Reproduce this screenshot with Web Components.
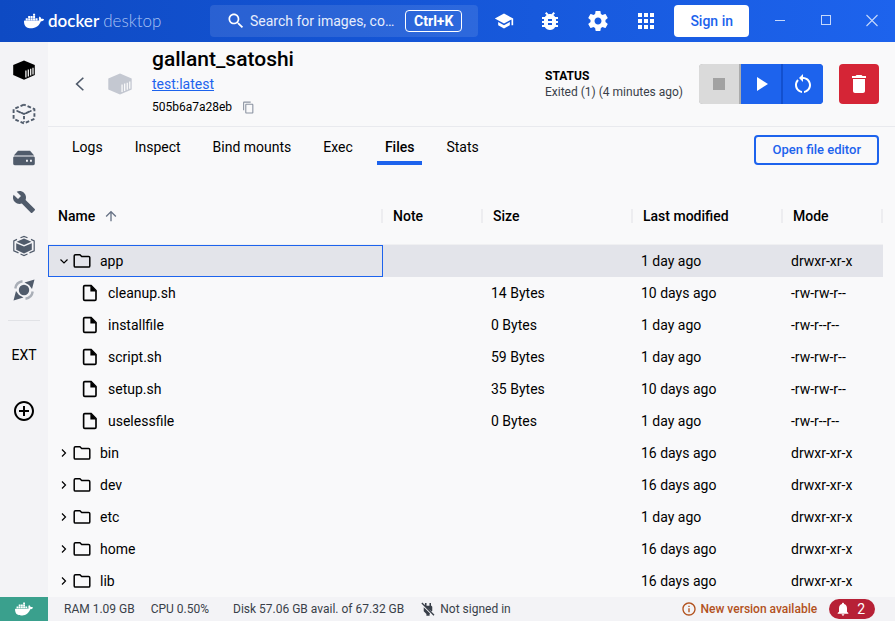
<!DOCTYPE html>
<html lang="en">
<head>
<meta charset="utf-8">
<title>Docker Desktop</title>
<style>
  html, body { height: 100%; margin: 0; }
  body {
    display: flex;
    font: 14px/20px Roboto, "Liberation Sans", sans-serif;
    color: #000;
    background: #f9f9fa;
    --blue: #1d63ed;
    --slate: #505b6b;
    --panel: #f3f3f6;
    --line: #e9eaee;
  }
</style>
</head>
<body>
<desktop-app></desktop-app>
<script>
const WHALE = '<path d="M13.983 11.078h2.119a.186.186 0 00.186-.185V9.006a.186.186 0 00-.186-.186h-2.119a.185.185 0 00-.185.185v1.888c0 .102.083.185.185.185m-2.954-5.43h2.118a.186.186 0 00.186-.186V3.574a.186.186 0 00-.186-.185h-2.118a.185.185 0 00-.185.185v1.888c0 .102.082.185.185.185m0 2.716h2.118a.187.187 0 00.186-.186V6.29a.186.186 0 00-.186-.185h-2.118a.185.185 0 00-.185.185v1.887c0 .102.082.185.185.186m-2.93 0h2.12a.186.186 0 00.184-.186V6.29a.185.185 0 00-.185-.185H8.1a.185.185 0 00-.185.185v1.887c0 .102.083.185.185.186m-2.964 0h2.119a.186.186 0 00.185-.186V6.29a.185.185 0 00-.185-.185H5.136a.186.186 0 00-.186.185v1.887c0 .102.084.185.186.186m5.893 2.715h2.118a.186.186 0 00.186-.185V9.006a.186.186 0 00-.186-.186h-2.118a.185.185 0 00-.185.185v1.888c0 .102.082.185.185.185m-2.93 0h2.12a.185.185 0 00.184-.185V9.006a.185.185 0 00-.184-.186h-2.12a.185.185 0 00-.184.185v1.888c0 .102.083.185.185.185m-2.964 0h2.119a.185.185 0 00.185-.185V9.006a.185.185 0 00-.184-.186h-2.12a.186.186 0 00-.186.186v1.887c0 .102.084.185.186.185m-2.92 0h2.12a.185.185 0 00.184-.185V9.006a.185.185 0 00-.184-.186h-2.12a.185.185 0 00-.184.185v1.888c0 .102.082.185.185.185M23.763 9.89c-.065-.051-.672-.51-1.954-.51-.338.001-.676.03-1.01.087-.248-1.7-1.653-2.53-1.716-2.566l-.344-.199-.226.327c-.284.438-.49.922-.612 1.43-.23.97-.09 1.882.403 2.661-.595.332-1.55.413-1.744.42H.751a.751.751 0 00-.75.748 11.376 11.376 0 00.692 4.062c.545 1.428 1.355 2.48 2.41 3.124 1.18.723 3.1 1.137 5.275 1.137.983.003 1.963-.086 2.93-.266a12.248 12.248 0 003.823-1.389c.98-.567 1.86-1.288 2.61-2.136 1.252-1.418 1.998-2.997 2.553-4.4h.221c1.372 0 2.215-.549 2.68-1.009.309-.293.55-.65.707-1.046l.098-.288Z"/>';

const ICONS = {
  whale: WHALE,
  search: '<path d="M15.5 14h-.79l-.28-.27C15.41 12.59 16 11.11 16 9.5 16 5.91 13.09 3 9.5 3S3 5.91 3 9.5 5.91 16 9.5 16c1.61 0 3.09-.59 4.23-1.57l.27.28v.79l5 4.99L20.49 19l-4.99-5zm-6 0C7.01 14 5 11.99 5 9.5S7.01 5 9.5 5 14 7.01 14 9.5 11.99 14 9.5 14z"/>',
  school: '<path d="M5 13.18v4L12 21l7-3.82v-4L12 17l-7-3.82zM12 3 1 9l11 6 9-4.91V17h2V9L12 3z"/>',
  bug: '<path d="M20 8h-2.81c-.45-.78-1.07-1.45-1.82-1.96L17 4.41 15.59 3l-2.17 2.17C12.96 5.06 12.49 5 12 5c-.49 0-.96.06-1.41.17L8.41 3 7 4.41l1.62 1.63C7.88 6.55 7.26 7.22 6.81 8H4v2h2.09c-.05.33-.09.66-.09 1v1H4v2h2v1c0 .34.04.67.09 1H4v2h2.81c1.04 1.79 2.97 3 5.19 3s4.15-1.21 5.19-3H20v-2h-2.09c.05-.33.09-.66.09-1v-1h2v-2h-2v-1c0-.34-.04-.67-.09-1H20V8zm-6 8h-4v-2h4v2zm0-4h-4v-2h4v2z"/>',
  gear: '<path d="M19.43 12.98c.04-.32.07-.64.07-.98s-.03-.66-.07-.98l2.11-1.65c.19-.15.24-.42.12-.64l-2-3.46c-.12-.22-.39-.3-.61-.22l-2.49 1c-.52-.4-1.08-.73-1.69-.98l-.38-2.65C14.46 2.18 14.25 2 14 2h-4c-.25 0-.46.18-.49.42l-.38 2.65c-.61.25-1.17.59-1.69.98l-2.49-1c-.23-.09-.49 0-.61.22l-2 3.46c-.13.22-.07.49.12.64l2.11 1.65c-.04.32-.07.65-.07.98s.03.66.07.98l-2.11 1.65c-.19.15-.24.42-.12.64l2 3.46c.12.22.39.3.61.22l2.49-1c.52.4 1.08.73 1.69.98l.38 2.65c.03.24.24.42.49.42h4c.25 0 .46-.18.49-.42l.38-2.65c.61-.25 1.17-.59 1.69-.98l2.49 1c.23.09.49 0 .61-.22l2-3.46c.12-.22.07-.49-.12-.64l-2.11-1.65zM12 15.5c-1.93 0-3.5-1.57-3.5-3.5s1.57-3.5 3.5-3.5 3.5 1.57 3.5 3.5-1.57 3.5-3.5 3.5z"/>',
  apps: '<path d="M4 8h4V4H4v4zm6 12h4v-4h-4v4zm-6 0h4v-4H4v4zm0-6h4v-4H4v4zm6 0h4v-4h-4v4zm6-10v4h4V4h-4zm-6 4h4V4h-4v4zm6 6h4v-4h-4v4zm0 6h4v-4h-4v4z"/>',
  minimize: '<path d="M7 11h10v1H7z"/>',
  maximize: '<path d="M7 6h10v10H7zM8 7v8h8V7z" fill-rule="evenodd"/>',
  close: '<path d="M6.5 6l11 11m0-11l-11 11" fill="none" stroke="currentColor" stroke-width="1.1"/>',
  container: '<path d="M12 2.4 22.8 7v10L12 21.8 1.2 17V7z"/><path d="M13.9 12.4v7M16.3 11.6v6.8M18.7 10.8v6.6M21 9.8v6.6" fill="none" stroke="var(--slat, #fff)" stroke-width="1.2"/>',
  image: '<path d="M12 2.6 22.4 7.2v9.6L12 21.4 1.6 16.8V7.2z" fill="none" stroke="currentColor" stroke-width="1.9" stroke-dasharray="3.7 2" stroke-dashoffset="1.8" stroke-linejoin="round"/><path d="M5.2 9 12 12l6.8-3" fill="none" stroke="currentColor" stroke-width="1.9" stroke-dasharray="3.3 1.6" stroke-linecap="round"/><path d="M12 14v6" fill="none" stroke="currentColor" stroke-width="1.9" stroke-dasharray="3.2 2"/>',
  volume: '<path d="M6 4.8h12l4.2 4.8H1.8z"/><path fill-rule="evenodd" d="M2.6 10.4h18.8c1 0 1.4.6 1.4 1.4v5.8c0 1-.6 1.6-1.6 1.6H2.8c-1 0-1.6-.6-1.6-1.6v-5.8c0-.8.4-1.4 1.4-1.4zM14 13.8v1.9h1.9v-1.9zM18 13.8v1.9h1.9v-1.9z"/>',
  wrench: '<path d="M22.7 19l-9.1-9.1c.9-2.3.4-5-1.5-6.9-2-2-5-2.4-7.4-1.3L9 6 6 9 1.6 4.7C.4 7.1.9 10.1 2.9 12.1c1.9 1.9 4.6 2.4 6.9 1.5l9.1 9.1c.4.4 1 .4 1.4 0l2.3-2.3c.5-.4.5-1.1.1-1.4z"/>',
  scout: '<path d="M12 4.6 19.4 7.7 12 11 4.6 7.700z"/><path d="M4.200 9.200 12 12.500l7.800-3.300v6.600L12 19.400l-7.800-3.600z"/><path d="M8.500 3.800 12 2.400l3.500 1.400M5 5.400 1.800 6.900v9.900l4.700 2.100M19 5.400l3.200 1.500v9.900l-4.700 2.100M8.500 20l3.500 1.500 3.500-1.500" fill="none" stroke="currentColor" stroke-width="1.200"/>',
  orbit: '<circle cx="12" cy="12" r="5.200"/><path d="M22.500 1.500 20 11l-3-4-4.500-2.500zM1.500 22.500 4 13l3 4 4.500 2.500z"/><path d="M3.300 10.500A8.500 8.500 0 0 1 10.500 3.300M20.700 13.500A8.500 8.500 0 0 1 13.500 20.700" fill="none" stroke="currentColor" stroke-width="2.400" opacity=".45"/>',
  plus: '<path d="M13 7h-2v4H7v2h4v4h2v-4h4v-2h-4V7zm-1-5C6.480 2 2 6.480 2 12s4.480 10 10 10 10-4.480 10-10S17.520 2 12 2zm0 18c-4.410 0-8-3.590-8-8s3.590-8 8-8 8 3.590 8 8-3.590 8-8 8z"/>',
  back: '<path d="M16 4.500 8 12l8 7.500" fill="none" stroke="currentColor" stroke-width="2"/>',
  copy: '<path d="M16 1H4c-1.100 0-2 .9-2 2v14h2V3h12V1zm3 4H8c-1.100 0-2 .9-2 2v14c0 1.100.9 2 2 2h11c1.100 0 2-.9 2-2V7c0-1.100-.9-2-2-2zm0 16H8V7h11v14z"/>',
  stop: '<path d="M6 6h12v12H6z"/>',
  play: '<path d="M8 5v14l11-7z"/>',
  restart: '<path d="M12 5V2L8 6l4 4V7c3.310 0 6 2.690 6 6 0 2.970-2.170 5.430-5 5.910v2.020c3.950-.49 7-3.850 7-7.930 0-4.420-3.580-8-8-8zM6 13c0-1.650.67-3.150 1.760-4.240L6.340 7.340C4.900 8.790 4 10.790 4 13c0 4.080 3.050 7.440 7 7.930v-2.020c-2.830-.48-5-2.940-5-5.910z"/>',
  trash: '<path d="M6 19c0 1.100.9 2 2 2h8c1.100 0 2-.9 2-2V7H6v12zM19 4h-3.500l-1-1h-5l-1 1H5v2h14V4z"/>',
  sort: '<path d="M4 12l1.410 1.410L11 7.830V20h2V7.830l5.580 5.590L20 12l-8-8-8 8z"/>',
  down: '<path d="M5 9l7 7 7-7" fill="none" stroke="currentColor" stroke-width="2.400"/>',
  right: '<path d="M8 5l7 7-7 7" fill="none" stroke="currentColor" stroke-width="2.400"/>',
  folder: '<path d="M3.200 3.600h6l2.400 2.300h9.200c1 0 1.600.6 1.600 1.600v11c0 1-.6 1.600-1.600 1.600H3.200c-1 0-1.600-.6-1.600-1.600V5.200c0-1 .6-1.600 1.600-1.600z" fill="none" stroke="currentColor" stroke-width="2"/>',
  file: '<path d="M5 2.200h8.500L20 8.700v11.600c0 .8-.6 1.500-1.500 1.500H5c-.8 0-1.500-.7-1.500-1.500V3.700c0-.9.700-1.500 1.500-1.500z" fill="none" stroke="currentColor" stroke-width="2.200"/><path d="M12.500 2v8H20.500z"/>',
  unplugged: '<path d="M7.500 3h2.300v4.200h4.400V3h2.300v4.200c1 0 1.900.9 1.900 1.900v5.500l-1 1L7.300 7.400zM5.600 9.500l9.600 9.100-.8.8V22H9.600v-2.600l-4-4.100z"/><path d="M2.800 3 21 21.500" stroke="currentColor" stroke-width="2"/>',
  info: '<path d="M11 7h2v2h-2zm0 4h2v6h-2zm1-9C6.480 2 2 6.480 2 12s4.480 10 10 10 10-4.480 10-10S17.520 2 12 2zm0 18c-4.410 0-8-3.590-8-8s3.590-8 8-8 8 3.590 8 8-3.590 8-8 8z"/>',
  bell: '<path d="M12 22c1.100 0 2-.9 2-2h-4c0 1.100.89 2 2 2zm6-6v-5c0-3.070-1.640-5.640-4.500-6.320V4c0-.83-.67-1.500-1.500-1.500s-1.500.67-1.500 1.500v.68C7.630 5.360 6 7.920 6 11v5l-2 2v1h16v-1l-2-2z"/>'
};

const RESET = `
  :host, *, *::before, *::after { box-sizing: border-box; }
  button, input { font: inherit; color: inherit; margin: 0; }
  button { padding: 0; border: 0; background: none; display: flex; align-items: center; justify-content: center; }
`;

function define(name, html, setup) {
  customElements.define(name, class extends HTMLElement {
    connectedCallback() {
      if (this.shadowRoot) return;
      const root = this.attachShadow({ mode: 'open' });
      const template = document.createElement('template');
      template.innerHTML = typeof html === 'function' ? html(this) : html;
      root.append(template.content.cloneNode(true));
      if (setup) setup(root, this);
    }
  });
}

define('ui-icon', el => `
  <style>
    :host { display: inline-flex; flex: none; width: var(--size, 24px); height: var(--size, 24px); }
    svg { width: 100%; height: 100%; fill: currentColor; }
  </style>
  <svg viewBox="0 0 24 24" aria-hidden="true">${ICONS[el.getAttribute('name')]}</svg>`);

define('title-bar', `
  <style>${RESET}
    :host { display: flex; align-items: center; flex: none; height: 42px; color: #fff;
      background: linear-gradient(90deg, #0e4ac3, #1d63ed); }
    .brand { display: flex; align-items: center; gap: 4px; padding-left: 24px; width: 210px; flex: none;
      font: 17px/24px Lato, "Open Sans", sans-serif; }
    .brand ui-icon { --size: 20px; }
    .brand b { font-weight: 600; }
    .brand span { font-weight: 300; color: #a9c2f3; }
    .search { display: flex; align-items: center; flex: 1; min-width: 0; height: 32px; padding: 0 16px;
      border-radius: 4px; background: rgba(255,255,255,.1); }
    .search ui-icon { --size: 20px; margin-right: 4px; }
    input { flex: 1; min-width: 0; padding: 0; border: 0; outline: 0; background: none; }
    input::placeholder { color: #e6edfc; opacity: 1; }
    kbd { font: 700 14px/20px Roboto, sans-serif; padding: 0 8px; border: 1px solid #fff; border-radius: 4px; }
    nav { display: flex; align-items: center; gap: 24px; padding: 0 16px 0 12px; }
    nav button { width: 24px; height: 32px; }
    nav .learn { --size: 20px; justify-content: flex-end; }
    .sign { height: 32px; padding: 0 16px; border-radius: 4px; background: #fff; color: var(--blue); font-weight: 500; }
    .window { display: flex; padding-left: 8px; color: #c6d8fb; }
    .window button { width: 46px; height: 42px; }
  </style>
  <div class="brand"><ui-icon name="whale"></ui-icon><b>docker</b><span>desktop</span></div>
  <label class="search"><ui-icon name="search"></ui-icon>
    <input type="text" aria-label="Search" placeholder="Search for images, co…"><kbd>Ctrl+K</kbd></label>
  <nav>
    <button class="learn" aria-label="Learning center"><ui-icon name="school"></ui-icon></button>
    <button aria-label="Troubleshoot"><ui-icon name="bug"></ui-icon></button>
    <button aria-label="Settings"><ui-icon name="gear"></ui-icon></button>
    <button aria-label="Apps"><ui-icon name="apps"></ui-icon></button>
  </nav>
  <button class="sign">Sign in</button>
  <div class="window">
    <button aria-label="Minimize"><ui-icon name="minimize"></ui-icon></button>
    <button aria-label="Maximize"><ui-icon name="maximize"></ui-icon></button>
    <button aria-label="Close"><ui-icon name="close"></ui-icon></button>
  </div>`);

define('side-nav', `
  <style>${RESET}
    :host { display: flex; flex-direction: column; flex: none; width: 48px; padding-top: 6px;
      background: var(--panel); color: var(--slate); --size: 24px; }
    a { display: flex; align-items: center; justify-content: center; height: 44px; color: inherit; }
    a.on { color: #000; }
    hr { width: 32px; margin: 8px auto 0; border: 0; border-top: 1px solid #e1e2e6; }
    .ext { margin: 24px 0 34px; text-align: center; color: #000; }
    button { width: 100%; height: 24px; color: #000; }
  </style>
  <a href="#containers" class="on" aria-label="Containers"><ui-icon name="container"></ui-icon></a>
  <a href="#images" aria-label="Images"><ui-icon name="image"></ui-icon></a>
  <a href="#volumes" aria-label="Volumes"><ui-icon name="volume"></ui-icon></a>
  <a href="#builds" aria-label="Builds"><ui-icon name="wrench"></ui-icon></a>
  <a href="#environments" aria-label="Dev environments"><ui-icon name="scout"></ui-icon></a>
  <a href="#scout" aria-label="Docker Scout"><ui-icon name="orbit"></ui-icon></a>
  <hr>
  <div class="ext">EXT</div>
  <button aria-label="Add extensions"><ui-icon name="plus"></ui-icon></button>`);

define('container-header', `
  <style>${RESET}
    :host { display: flex; align-items: center; flex: none; height: 85px; padding: 0 16px 0 20px;
      border-bottom: 1px solid var(--line); }
    .back { width: 24px; height: 40px; color: var(--slate); --size: 20px; }
    .cube { margin: 0 19px 0 15px; color: #c4c8d1; --size: 26px; --slat: #f9f9fa; }
    .about { flex: 1; min-width: 0; padding-bottom: 4px; }
    h1 { margin: 0 0 3px; font-size: 21px; line-height: 24px; font-weight: 500; }
    a { display: block; width: max-content; color: var(--blue); }
    .id { display: flex; align-items: center; gap: 10px; margin-top: 3px; font-size: 12px; }
    .id button { color: #8b93a1; --size: 13px; }
    .status { margin-right: 16px; font-size: 12px; line-height: 16px; color: #393f49; }
    .status b { display: block; color: #000; font-weight: 700; }
    .group { display: flex; gap: 2px; margin-right: 16px; border-radius: 4px; overflow: hidden;
      background: linear-gradient(90deg, #acacac 50%, #1250cf 50%); }
    .group button, .delete { width: 40px; height: 40px; background: var(--blue); color: #fff; --size: 24px; }
    .group button:disabled { background: #dadada; color: #a2a2a2; }
    .delete { border-radius: 4px; background: #d52536; }
  </style>
  <button class="back" aria-label="Back"><ui-icon name="back"></ui-icon></button>
  <ui-icon class="cube" name="container"></ui-icon>
  <div class="about">
    <h1>gallant_satoshi</h1>
    <a href="#image">test:latest</a>
    <div class="id">505b6a7a28eb <button aria-label="Copy id"><ui-icon name="copy"></ui-icon></button></div>
  </div>
  <div class="status"><b>STATUS</b>Exited (1) (4 minutes ago)</div>
  <div class="group">
    <button disabled aria-label="Stop"><ui-icon name="stop"></ui-icon></button>
    <button aria-label="Start"><ui-icon name="play"></ui-icon></button>
    <button aria-label="Restart"><ui-icon name="restart"></ui-icon></button>
  </div>
  <button class="delete" aria-label="Delete"><ui-icon name="trash"></ui-icon></button>`);

define('tab-bar', `
  <style>${RESET}
    :host { display: flex; align-items: flex-start; justify-content: space-between; flex: none;
      padding: 8px 16px 0; }
    nav { display: flex; gap: 16px; }
    a { padding: 2px 8px 4px; color: inherit; text-decoration: none; border-bottom: 4px solid transparent; line-height: 20px; }
    a[aria-current] { font-weight: 500; border-color: var(--blue); }
    button { height: 30px; padding: 0 16px; border: 2px solid var(--blue); border-radius: 4px;
      color: var(--blue); font-size: 13px; font-weight: 500; }
  </style>
  <nav>
    <a href="#logs">Logs</a><a href="#inspect">Inspect</a><a href="#mounts">Bind mounts</a>
    <a href="#exec">Exec</a><a href="#files" aria-current="page">Files</a><a href="#stats">Stats</a>
  </nav>
  <button>Open file editor</button>`);

const FILES = [
  ['open', 'app', '', '1 day ago', 'drwxr-xr-x'],
  ['file', 'cleanup.sh', '14 Bytes', '10 days ago', '-rw-rw-r--'],
  ['file', 'installfile', '0 Bytes', '1 day ago', '-rw-r--r--'],
  ['file', 'script.sh', '59 Bytes', '1 day ago', '-rw-rw-r--'],
  ['file', 'setup.sh', '35 Bytes', '10 days ago', '-rw-rw-r--'],
  ['file', 'uselessfile', '0 Bytes', '1 day ago', '-rw-r--r--'],
  ['dir', 'bin', '', '16 days ago', 'drwxr-xr-x'],
  ['dir', 'dev', '', '16 days ago', 'drwxr-xr-x'],
  ['dir', 'etc', '', '1 day ago', 'drwxr-xr-x'],
  ['dir', 'home', '', '16 days ago', 'drwxr-xr-x'],
  ['dir', 'lib', '', '16 days ago', 'drwxr-xr-x']
];

define('file-table', `
  <style>${RESET}
    :host { display: block; flex: 1; min-height: 0; overflow: hidden; padding: 22px 12px 0 0; }
    table { width: 100%; table-layout: fixed; border-collapse: separate; border-spacing: 0; }
    th { height: 58px; padding: 0 10px; text-align: left; font-weight: 500; border-bottom: 1px solid #f0f0f2;
      background: linear-gradient(#ededf0, #ededf0) right center / 2px 14px no-repeat; }
    th span { display: flex; align-items: center; gap: 8px; }
    th ui-icon { --size: 16px; color: #677285; }
    .note, .mode { width: 100px; }
    .size, .date { width: 150px; }
    td { height: 32px; padding: 0 8px; }
    .entry { display: flex; align-items: center; }
    .entry button { width: 16px; height: 16px; --size: 12px; }
    .kind { --size: 18px; margin: 0 9px 0 1px; }
    .file .entry { padding-left: 24px; }
    .open td { background: #e3e4ea; }
    .open td:first-child { box-shadow: inset 0 0 0 1px var(--blue); }
  </style>
  <table>
    <thead><tr>
      <th><span>Name <ui-icon name="sort"></ui-icon></span></th>
      <th class="note">Note</th><th class="size">Size</th>
      <th class="date">Last modified</th><th class="mode">Mode</th>
    </tr></thead>
    <tbody></tbody>
  </table>`, root => {
  root.querySelector('tbody').innerHTML = FILES.map(([kind, name, size, date, mode]) => {
    const toggle = kind === 'file' ? '' :
      `<button aria-label="Toggle ${name}"><ui-icon name="${kind === 'open' ? 'down' : 'right'}"></ui-icon></button>`;
    return `<tr class="${kind}"><td><div class="entry">${toggle}<ui-icon class="kind" name="${kind === 'file' ? 'file' : 'folder'}"></ui-icon>${name}</div></td>
      <td></td><td>${size}</td><td>${date}</td><td>${mode}</td></tr>`;
  }).join('');
});

define('status-bar', `
  <style>${RESET}
    :host { display: flex; align-items: center; flex: none; height: 24px; padding-right: 20px;
      background: var(--panel); color: #393f49; font-size: 12px; }
    .engine { width: 48px; height: 24px; margin-right: 16px; background: #3aa08d; color: #fff; --size: 18px; }
    .cpu { margin: 0 24px 0 16px; }
    .user { display: flex; align-items: center; gap: 4px; margin-left: 16px; --size: 16px; }
    .update { gap: 4px; margin-left: auto; color: #b2511d; font-weight: 500; --size: 16px; }
    .alerts { gap: 6px; height: 20px; margin-left: 12px; padding: 0 10px 0 6px; border-radius: 10px;
      background: #b72136; color: #fff; font-size: 14px; --size: 16px; }
  </style>
  <button class="engine" aria-label="Engine running"><ui-icon name="whale"></ui-icon></button>
  <span>RAM 1.09 GB</span>
  <span class="cpu">CPU 0.50%</span>
  <span>Disk 57.06 GB avail. of 67.32 GB</span>
  <span class="user"><ui-icon name="unplugged"></ui-icon>Not signed in</span>
  <button class="update"><ui-icon name="info"></ui-icon>New version available</button>
  <button class="alerts"><ui-icon name="bell"></ui-icon>2</button>`);

define('app-shell', `
  <style>
    :host { display: flex; flex-direction: column; flex: 1; min-width: 0; height: 100%; }
    .body { display: flex; flex: 1; min-height: 0; }
    main { display: flex; flex-direction: column; flex: 1; min-width: 0; }
  </style>
  <slot name="top"></slot>
  <div class="body"><slot name="side"></slot><main><slot></slot></main></div>
  <slot name="bottom"></slot>`);

define('desktop-app', `
  <style>:host { display: flex; flex: 1; min-width: 0; height: 100%; }</style>
  <app-shell>
    <title-bar slot="top"></title-bar>
    <side-nav slot="side"></side-nav>
    <container-header></container-header>
    <tab-bar></tab-bar>
    <file-table></file-table>
    <status-bar slot="bottom"></status-bar>
  </app-shell>`);
</script>
</body>
</html>
